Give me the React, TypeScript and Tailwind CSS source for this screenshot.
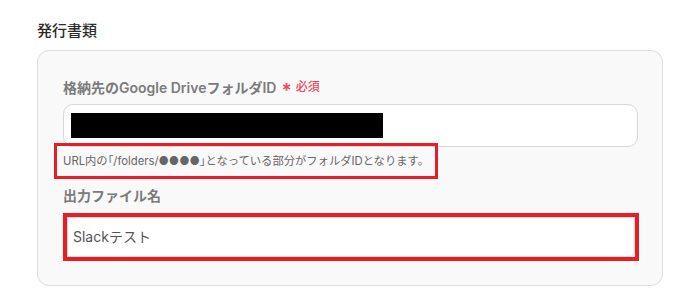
export default function App() {
  return (
    <div
      className="w-[700px] h-[304px] bg-white pl-[37px] pt-[21px]"
      style={{ fontFamily: 'Inter, "Noto Sans CJK JP", sans-serif' }}
    >
      <h2 className="text-[15px] leading-[20px] font-medium text-[#2b2b2b]">発行書類</h2>

      <div className="mt-[9px] w-[626px] h-[236px] rounded-[12px] border border-[#dcdde3] bg-[#f9f9fa] pl-[25px] pr-[24px] pt-[26px]">
        <div className="flex items-center h-[20px] text-[14px] font-semibold text-[#7b7b7b]">
          <span>格納先のGoogle DriveフォルダID</span>
          <span className="ml-[5px] text-[#f0465a] text-[19px] leading-none mt-[6px]">*</span>
          <span className="ml-[4px] text-[#f0465a] text-[12px] font-medium">必須</span>
        </div>

        <div className="mt-[7px] h-[43px] rounded-[10px] border border-[#d5d7dd] bg-white pl-[7px] pt-[8px]">
          <div className="w-[312px] h-[25px] bg-black" />
        </div>

        <div className="relative mt-[6px] h-[16px]">
          <p className="text-[11.3px] leading-[16px] text-[#666]">
            URL内の<span className="[font-feature-settings:'palt']">「</span>/folders/●●●●<span className="[font-feature-settings:'palt']">」</span>となっている部分がフォルダIDとなります。
          </p>
          <div className="absolute left-[-9px] top-[-10px] w-[384px] h-[36px] border-[3px] border-[#e61e25]" />
        </div>

        <div className="mt-[16px] h-[20px] flex items-center text-[14px] font-semibold text-[#7b7b7b]">出力ファイル名</div>

        <div className="mt-[8px] w-[576px] h-[48px] border-[4px] border-[#e61e25]">
          <div className="h-full rounded-br-[6px] border border-[#d5d7dd] bg-white flex items-center pl-[5px] pb-[2px] text-[14px] text-[#555]">
            Slackテスト
          </div>
        </div>
      </div>
    </div>
  )
}
